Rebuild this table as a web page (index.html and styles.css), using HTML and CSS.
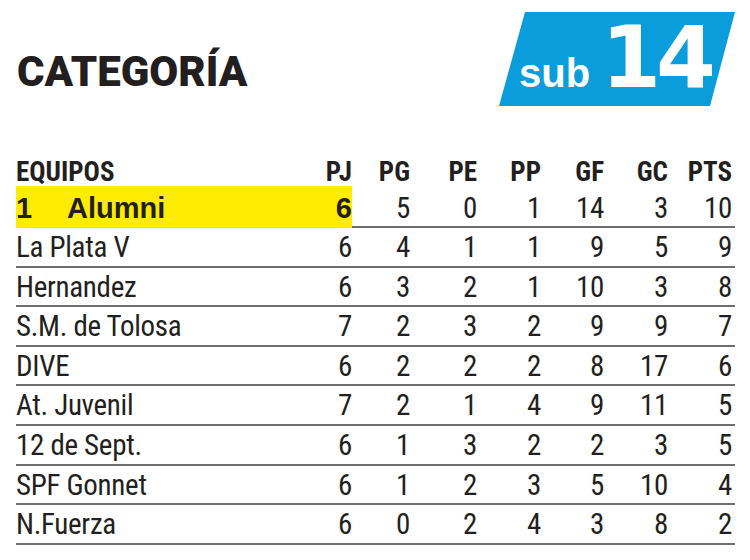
FILE: index.html
```html
<!DOCTYPE html>
<html lang="es">
<head>
<meta charset="utf-8">
<title>Categoría sub 14</title>
<link rel="stylesheet" href="styles.css">
</head>
<body>
<div class="page">
  <header class="top">
    <h1 class="title">CATEGORÍA</h1>
    <div class="badge"><span class="sub">sub</span><span class="num">14</span></div>
  </header>
  <div class="table">
    <div class="row head">
      <div class="c name">EQUIPOS</div>
      <div class="c n">PJ</div>
      <div class="c n">PG</div>
      <div class="c n">PE</div>
      <div class="c n">PP</div>
      <div class="c n">GF</div>
      <div class="c n">GC</div>
      <div class="c n last">PTS</div>
    </div>
    <div class="row leader">
      <div class="c name hl"><span class="rank">1</span>Alumni</div>
      <div class="c n hl">6</div>
      <div class="c n">5</div>
      <div class="c n">0</div>
      <div class="c n">1</div>
      <div class="c n">14</div>
      <div class="c n">3</div>
      <div class="c n last">10</div>
    </div>
    <div class="row">
      <div class="c name">La Plata V</div>
      <div class="c n">6</div><div class="c n">4</div><div class="c n">1</div><div class="c n">1</div><div class="c n">9</div><div class="c n">5</div><div class="c n last">9</div>
    </div>
    <div class="row">
      <div class="c name">Hernandez</div>
      <div class="c n">6</div><div class="c n">3</div><div class="c n">2</div><div class="c n">1</div><div class="c n">10</div><div class="c n">3</div><div class="c n last">8</div>
    </div>
    <div class="row">
      <div class="c name">S.M. de Tolosa</div>
      <div class="c n">7</div><div class="c n">2</div><div class="c n">3</div><div class="c n">2</div><div class="c n">9</div><div class="c n">9</div><div class="c n last">7</div>
    </div>
    <div class="row">
      <div class="c name">DIVE</div>
      <div class="c n">6</div><div class="c n">2</div><div class="c n">2</div><div class="c n">2</div><div class="c n">8</div><div class="c n">17</div><div class="c n last">6</div>
    </div>
    <div class="row">
      <div class="c name">At. Juvenil</div>
      <div class="c n">7</div><div class="c n">2</div><div class="c n">1</div><div class="c n">4</div><div class="c n">9</div><div class="c n">11</div><div class="c n last">5</div>
    </div>
    <div class="row">
      <div class="c name">12 de Sept.</div>
      <div class="c n">6</div><div class="c n">1</div><div class="c n">3</div><div class="c n">2</div><div class="c n">2</div><div class="c n">3</div><div class="c n last">5</div>
    </div>
    <div class="row">
      <div class="c name">SPF Gonnet</div>
      <div class="c n">6</div><div class="c n">1</div><div class="c n">2</div><div class="c n">3</div><div class="c n">5</div><div class="c n">10</div><div class="c n last">4</div>
    </div>
    <div class="row">
      <div class="c name">N.Fuerza</div>
      <div class="c n">6</div><div class="c n">0</div><div class="c n">2</div><div class="c n">4</div><div class="c n">3</div><div class="c n">8</div><div class="c n last">2</div>
    </div>
  </div>
</div>
</body>
</html>
```
FILE: styles.css
```css
* { box-sizing: border-box; }
html, body { margin: 0; padding: 0; background: #fff; }
body {
  width: 750px;
  height: 560px;
  overflow: hidden;
  color: #231f20;
  font-family: "Roboto", "Liberation Sans", sans-serif;
  font-stretch: 75%;
}
.page { padding: 0 15px 0 16px; }

.top {
  display: flex;
  justify-content: space-between;
  align-items: flex-start;
  padding-top: 12px;
  height: 106px;
}
.title {
  margin: 39px 0 0 1px;
  font-family: "Roboto", "Liberation Sans", sans-serif;
  font-stretch: 100%;
  font-weight: 900;
  font-size: 42px;
  line-height: 1;
  letter-spacing: 0;
}
.badge {
  width: 236px;
  height: 94px;
  background: #0b9cdc;
  color: #fff;
  clip-path: polygon(26px 0, 100% 0, calc(100% - 25px) 100%, 0 100%);
  display: flex;
  align-items: baseline;
  padding: 2px 0 0 20px;
  gap: 17px;
  font-stretch: 100%;
  font-weight: 700;
  line-height: 1;
}
.badge .sub { font-family: "Liberation Sans", Arial, sans-serif; font-size: 40px; }
.badge .num {
  font-family: "DejaVu Sans", sans-serif;
  font-size: 86px;
  letter-spacing: -5px;
  margin-left: -6px;
}

.table { width: 719px; }
.row {
  display: grid;
  grid-template-columns: 296px 40px 58px 67px 64px 63px 64px 67px;
  height: 39.6px;
  border-bottom: 2px solid #6e6e6e;
  font-size: 29px;
  line-height: 37.6px;
  letter-spacing: -0.3px;
  padding-top: 1px;
}
.c { white-space: nowrap; }
.n { text-align: right; }
.last { padding-right: 3px; }

.row.head {
  height: 80px;
  border-bottom: 0;
  align-items: end;
  font-size: 27px;
  font-weight: 700;
  line-height: 26px;
  letter-spacing: 0;
  padding: 0 0 1px;
}
.row.leader {
  height: 42px;
  padding-top: 0;
  line-height: 40px;
}
.leader .hl {
  background: #ffec00;
  font-family: "Liberation Sans", Arial, sans-serif;
  font-stretch: 100%;
  font-weight: 700;
  letter-spacing: 0;
  padding-top: 2px;
}
.leader .n { padding-top: 2px; }
.rank { display: inline-block; width: 51px; }
```
